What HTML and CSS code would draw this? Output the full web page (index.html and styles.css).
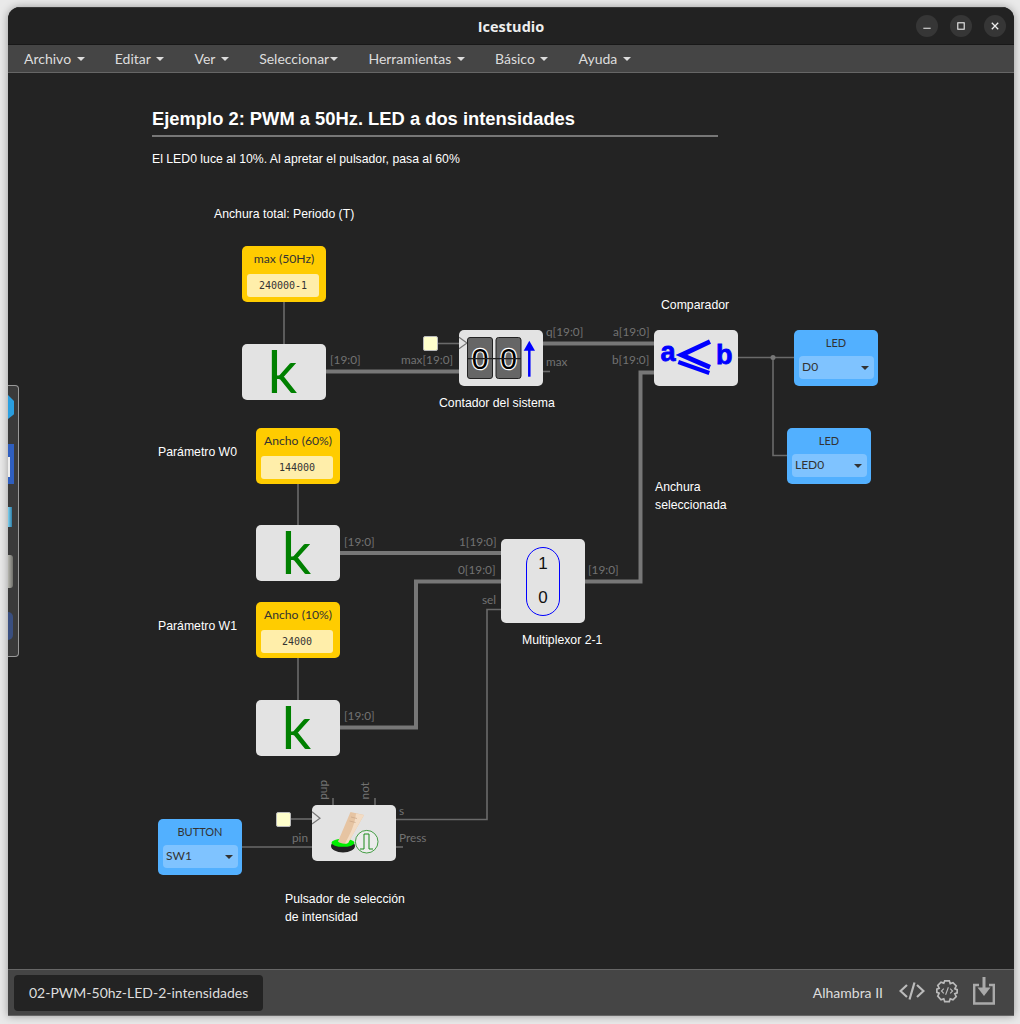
FILE: index.html
```html
<!DOCTYPE html>
<html lang="en">
<head>
    <meta charset="UTF-8">
    <meta name="viewport" content="width=device-width, initial-scale=1.0">
    <title>Icestudio</title>
    <link rel="stylesheet" href="styles.css">
</head>
<body>
    <div class="window">
        <header class="titlebar">
            <span class="title">Icestudio</span>
            <div class="win-buttons">
                <span class="win-btn"><svg width="24" height="24" viewBox="0 0 24 24"><path d="M8 14.500h8" stroke="#eee" stroke-width="1.200"/></svg></span>
                <span class="win-btn"><svg width="24" height="24" viewBox="0 0 24 24"><rect x="8.500" y="8.500" width="7" height="7" fill="none" stroke="#eee" stroke-width="1.200"/></svg></span>
                <span class="win-btn"><svg width="24" height="24" viewBox="0 0 24 24"><path d="M8.500 8.500l7 7M15.500 8.500l-7 7" stroke="#eee" stroke-width="1.400"/></svg></span>
            </div>
        </header>
        <nav class="menubar">
            <span class="menu-item">Archivo<i class="caret"></i></span>
            <span class="menu-item">Editar<i class="caret"></i></span>
            <span class="menu-item">Ver<i class="caret"></i></span>
            <span class="menu-item tight">Seleccionar<i class="caret"></i></span>
            <span class="menu-item">Herramientas<i class="caret"></i></span>
            <span class="menu-item">Básico<i class="caret"></i></span>
            <span class="menu-item">Ayuda<i class="caret"></i></span>
        </nav>

        <main class="canvas">
            <div class="diagram">
                <!-- wires, in page coordinates -->
                <svg class="wires" width="1020" height="1024" viewBox="0 0 1020 1024" fill="none">
                    <g stroke="#777" stroke-width="4">
                        <path d="M326 371.500H459"/>
                        <path d="M543 343.500H654"/>
                        <path d="M654 372.500H640.500V581.500H585"/>
                        <path d="M340 553H501"/>
                        <path d="M501 581.500H416V727.500H340"/>
                    </g>
                    <g stroke="#6a6a6a" stroke-width="1.600">
                        <path d="M284 302V344"/>
                        <path d="M298 484V525"/>
                        <path d="M298 658V700"/>
                        <path d="M438 343.500H459"/>
                        <path d="M543 371.500H550"/>
                        <path d="M738 357.500H794"/>
                        <path d="M773 357.500V455.500H787"/>
                        <path d="M501 609.500H487V819.500H396"/>
                        <path d="M242 847H312"/>
                        <path d="M291 819H312"/>
                        <path d="M333 798V805"/>
                        <path d="M375 798V805"/>
                        <path d="M396 847H403"/>
                    </g>
                    <circle cx="773" cy="357.500" r="2.500" fill="#777"/>
                </svg>

                <h1 class="heading">Ejemplo 2: PWM a 50Hz. LED a dos intensidades</h1>
                <p class="note n-intro">El LED0 luce al 10%. Al apretar el pulsador, pasa al 60%</p>
                <p class="note n-period">Anchura total: Periodo (T)</p>
                <p class="note n-counter">Contador del sistema</p>
                <p class="note n-comp">Comparador</p>
                <p class="note n-w0">Parámetro W0</p>
                <p class="note n-w1">Parámetro W1</p>
                <p class="note n-sel">Anchura<br>seleccionada</p>
                <p class="note n-mux">Multiplexor 2-1</p>
                <p class="note n-press">Pulsador de selección<br>de intensidad</p>

                <div class="block const c-max"><span class="block-name">max (50Hz)</span><span class="const-value">240000-1</span></div>
                <div class="block const c-w0"><span class="block-name">Ancho (60%)</span><span class="const-value">144000</span></div>
                <div class="block const c-w1"><span class="block-name">Ancho (10%)</span><span class="const-value">24000</span></div>

                <div class="block code k-max">k</div>
                <div class="block code k-w0">k</div>
                <div class="block code k-w1">k</div>

                <span class="clock clk-counter"></span>
                <span class="clock clk-press"></span>

                <!-- counter -->
                <div class="block code b-counter">
                    <svg width="84" height="56" viewBox="0 0 84 56" fill="none">
                        <path d="M0 7.300L8 13L0 18.700" stroke="#777" stroke-width="1.200"/>
                        <rect x="8.500" y="7.500" width="25" height="41" rx="2.500" fill="#666" stroke="#222"/>
                        <rect x="37" y="7.500" width="25" height="41" rx="2.500" fill="#666" stroke="#222"/>
                        <text x="21" y="39" class="digit">0</text>
                        <text x="49.500" y="39" class="digit">0</text>
                        <path d="M8.500 28.700H62" stroke="#222" stroke-width="1.300"/>
                        <path d="M70.300 46.700V20" stroke="#00f" stroke-width="2.500"/>
                        <path d="M64.700 20.700L70.300 10.700L76 20.700Z" fill="#00f"/>
                    </svg>
                </div>

                <!-- comparator -->
                <div class="block code b-comp">
                    <svg width="84" height="56" viewBox="0 0 84 56" fill="none">
                        <text x="6.500" y="31" class="cmp-letter">a</text>
                        <text x="62" y="34" class="cmp-letter">b</text>
                        <path d="M56 11.700L27.500 25L56 37.200" stroke="#00f" stroke-width="4.800"/>
                        <path d="M24.300 32L55.300 43" stroke="#00f" stroke-width="4"/>
                    </svg>
                </div>

                <!-- mux -->
                <div class="block code b-mux">
                    <div class="mux-pill"><span>1</span><span>0</span></div>
                </div>

                <!-- push button -->
                <div class="block code b-press">
                    <svg width="84" height="56" viewBox="0 0 84 56" fill="none">
                        <path d="M0 6.700L8 13.300L0 19" stroke="#777" stroke-width="1.200"/>
                        <ellipse cx="31" cy="41" rx="12" ry="6.500" fill="#222"/>
                        <ellipse cx="31" cy="37.800" rx="11.500" ry="4" fill="#0e0"/>
                        <path d="M26 36.500L38.500 7L52 10L36 38C33 39.500 28 38.500 26 36.500Z" fill="#e6c4a2"/>
                        <path d="M44 8.500L52 10L36 38C35 38.400 34 38.500 33 38.500C39 28 43 18 44 8.500Z" fill="#f3dcc4"/>
                        <path d="M39 12l6 1.500M37.500 16l6 1.500" stroke="#c9a586" stroke-width=".7"/>
                        <circle cx="54.700" cy="36.700" r="11.300" fill="#ececec" stroke="#1a8a1a" stroke-width=".8"/>
                        <path d="M48 44H52V29H57V44H61" stroke="#1a8a1a" stroke-width="1"/>
                    </svg>
                </div>

                <div class="block pin p-d0"><span class="block-name">LED</span><span class="pin-select">D0<i class="caret dark"></i></span></div>
                <div class="block pin p-led0"><span class="block-name">LED</span><span class="pin-select">LED0<i class="caret dark"></i></span></div>
                <div class="block pin p-sw1"><span class="block-name">BUTTON</span><span class="pin-select">SW1<i class="caret dark"></i></span></div>

                <span class="port pt-k0">[19:0]</span>
                <span class="port pt-cmax">max[19:0]</span>
                <span class="port pt-q">q[19:0]</span>
                <span class="port pt-a">a[19:0]</span>
                <span class="port pt-b">b[19:0]</span>
                <span class="port pt-max">max</span>
                <span class="port pt-k1">[19:0]</span>
                <span class="port pt-in1">1[19:0]</span>
                <span class="port pt-in0">0[19:0]</span>
                <span class="port pt-out">[19:0]</span>
                <span class="port pt-sel">sel</span>
                <span class="port pt-k2">[19:0]</span>
                <span class="port pt-pin">pin</span>
                <span class="port pt-s">s</span>
                <span class="port pt-press">Press</span>
                <span class="port vert pt-pup">pup</span>
                <span class="port vert pt-not">not</span>
            </div>

            <!-- collapsed dock at the left edge -->
            <div class="dock">
                <span class="dock-icon d-blue"></span>
                <span class="dock-icon d-bar"></span>
                <span class="dock-icon d-cyan"></span>
                <span class="dock-icon d-grey"></span>
                <span class="dock-icon d-round"></span>
            </div>
        </main>

        <footer class="footer">
            <span class="file-tab">02-PWM-50hz-LED-2-intensidades</span>
            <div class="footer-right">
                <span class="board">Alhambra II</span>
                <svg width="26" height="26" viewBox="0 0 26 26" fill="none" stroke="#bbb" stroke-width="2.200">
                    <path d="M8 7L1.500 13L8 19M18 7L24.500 13L18 19M15.500 4.500L10.500 21.500"/>
                </svg>
                <svg width="24" height="24" viewBox="0 0 26 26" fill="none" stroke="#bbb">
                    <path stroke-width="1.800" d="M10.500 2h5l1 3 3-1 3.500 3.500-1.500 3 2.500 1v3.500l-2.500 1 1.500 3-3.500 3.500-3-1-1 3h-5l-1-3-3 1L3 18.500l1.500-3-2.500-1V11l2.500-1-1.500-3L6.500 3.500l3 1z"/>
                    <path stroke-width="1.200" d="M9.500 10.500L7 13l2.500 2.500M16.500 10.500L19 13l-2.500 2.500M14.500 9l-3 8"/>
                </svg>
                <svg class="save-icon" width="22" height="28" viewBox="0 0 22 28" fill="none" stroke="#aaa" stroke-width="2.400">
                    <path d="M6 8H1.200V26.500H20.800V8H16"/>
                    <path d="M11 0V12" stroke-width="3"/>
                    <path d="M4.500 10.500L11 19L17.500 10.500Z" fill="#aaa" stroke="none"/>
                </svg>
            </div>
        </footer>
    </div>
</body>
</html>
```

FILE: styles.css
```css
* {
    box-sizing: border-box;
}
html, body {
    height: 100%;
}
body {
    margin: 0;
    padding: 7px 6px 8px 8px;
    background: #e9e9e9;
    font-family: Lato, sans-serif;
    color: #ddd;
    overflow: hidden;
}
.window {
    display: flex;
    flex-direction: column;
    height: 100%;
    background: #232323;
    border-radius: 12px 12px 0 0;
    box-shadow: 0 0 8px rgba(0, 0, 0, 0.35);
    overflow: hidden;
}

/* title bar */
.titlebar {
    position: relative;
    flex: 0 0 38px;
    display: flex;
    align-items: center;
    justify-content: center;
    background: #222;
    border-top: 1px solid #383838;
    border-bottom: 1px solid #181818;
}
.title {
    font-family: "Open Sans", sans-serif;
    font-weight: 700;
    font-size: 14.500px;
    color: #eee;
}
.win-buttons {
    position: absolute;
    right: 8px;
    top: 7px;
    display: flex;
    gap: 12px;
}
.win-btn {
    width: 22px;
    height: 22px;
    border-radius: 50%;
    background: #363636;
    display: flex;
    align-items: center;
    justify-content: center;
}

/* menu bar */
.menubar {
    flex: 0 0 28px;
    display: flex;
    align-items: center;
    padding-left: 16px;
    gap: 30.200px;
    background: #454545;
    border-bottom: 1px solid #666;
    font-size: 14px;
    color: #ddd;
}
.menu-item {
    display: flex;
    align-items: center;
}
.caret {
    display: inline-block;
    margin-left: 5.500px;
    border-top: 4px solid #ddd;
    border-left: 4px solid transparent;
    border-right: 4px solid transparent;
}
.menu-item.tight .caret {
    margin-left: 1px;
}
.caret.dark {
    margin-left: auto;
    margin-top: 4px;
    border-top-color: #333;
    border-top-width: 4.500px;
}

/* canvas */
.canvas {
    position: relative;
    flex: 1;
    overflow: hidden;
    background: #232323;
}
.diagram {
    position: absolute;
    left: -8px;
    top: -73px;
    width: 1020px;
    height: 1024px;
}
.wires {
    position: absolute;
    left: 0;
    top: 0;
}
.heading {
    position: absolute;
    left: 152px;
    top: 107px;
    width: 566px;
    height: 30px;
    margin: 0;
    border-bottom: 2px solid #777;
    font-family: "Liberation Sans", sans-serif;
    font-size: 18.350px;
    font-weight: 700;
    line-height: 23px;
    color: #fff;
}
.note {
    position: absolute;
    margin: 0;
    font-family: "Liberation Sans", sans-serif;
    font-size: 12.250px;
    line-height: 18px;
    color: #fff;
    white-space: nowrap;
}
.n-intro { left: 152px; top: 150px; }
.n-period { left: 214px; top: 205px; }
.n-counter { left: 439px; top: 394px; }
.n-comp { left: 661px; top: 296px; }
.n-w0 { left: 158px; top: 443px; }
.n-w1 { left: 158px; top: 617px; }
.n-sel { left: 655px; top: 478px; }
.n-mux { left: 522px; top: 631px; }
.n-press { left: 285px; top: 890px; }

/* blocks */
.block {
    position: absolute;
    width: 84px;
    height: 56px;
    border-radius: 5px;
}
.block-name {
    display: block;
    padding-top: 5px;
    height: 28px;
    text-align: center;
    font-size: 12.200px;
    line-height: 15px;
    color: #333;
}
.const {
    background: #fc0;
}
.const-value {
    display: block;
    margin: 0 7px 0 5px;
    height: 23px;
    border-radius: 3px;
    background: #fea;
    text-align: center;
    font-family: "DejaVu Sans Mono", monospace;
    font-size: 10px;
    line-height: 24px;
    color: #333;
}
.c-max { left: 242px; top: 246px; }
.c-w0 { left: 256px; top: 428px; }
.c-w1 { left: 256px; top: 602px; }
.code {
    background: #e3e3e3;
}
.k-max, .k-w0, .k-w1 {
    padding-right: 3px;
    text-align: center;
    font-size: 58px;
    line-height: 53px;
    color: #008000;
}
.k-max { left: 242px; top: 344px; }
.k-w0 { left: 256px; top: 525px; }
.k-w1 { left: 256px; top: 700px; }
.b-counter { left: 459px; top: 330px; }
.b-comp { left: 654px; top: 330px; }
.b-mux {
    left: 501px;
    top: 539px;
    height: 84px;
    display: flex;
    align-items: center;
    justify-content: center;
}
.b-press { left: 312px; top: 805px; }
.digit {
    font-family: "Liberation Sans", sans-serif;
    font-size: 30px;
    fill: #000;
    stroke: #fff;
    stroke-width: 2.400px;
    paint-order: stroke;
    text-anchor: middle;
}
.cmp-letter {
    font-family: "Liberation Sans", sans-serif;
    font-size: 27px;
    font-weight: 700;
    fill: #00f;
    stroke: #00f;
    stroke-width: 0.800px;
}
.mux-pill {
    width: 34px;
    height: 69px;
    display: flex;
    flex-direction: column;
    justify-content: space-around;
    align-items: center;
    border: 1px solid #00f;
    border-radius: 17px;
    font-family: "Liberation Sans", sans-serif;
    font-size: 17px;
    color: #111;
}
.pin {
    background: #52b0ff;
}
.pin .block-name {
    height: 26px;
    font-size: 11px;
}
.pin-select {
    display: flex;
    align-items: center;
    margin: 0 4px 0 5px;
    height: 23px;
    padding: 0 5px 3px 3px;
    border-radius: 4px;
    background: #7fc3ff;
    font-size: 12px;
    color: #333;
}
.p-d0 { left: 794px; top: 330px; }
.p-led0 { left: 787px; top: 428px; }
.p-sw1 { left: 158px; top: 819px; }
.clock {
    position: absolute;
    width: 15px;
    height: 15px;
    border-radius: 2px;
    background: #ffc;
    border: 1px solid #bbb;
}
.clk-counter { left: 423px; top: 336px; }
.clk-press { left: 276px; top: 812px; }

/* port labels */
.port {
    position: absolute;
    font-size: 11.800px;
    line-height: 14px;
    color: #727272;
    white-space: nowrap;
}
.port.vert {
    writing-mode: vertical-rl;
    transform: rotate(180deg);
}
.pt-k0 { left: 330px; top: 353px; }
.pt-cmax { left: 401px; top: 353px; }
.pt-q { left: 546px; top: 325px; }
.pt-a { left: 613px; top: 325px; }
.pt-b { left: 612px; top: 353px; }
.pt-max { left: 546px; top: 355px; }
.pt-k1 { left: 344px; top: 535px; }
.pt-in1 { left: 459px; top: 535px; }
.pt-in0 { left: 458px; top: 563px; }
.pt-out { left: 588px; top: 563px; }
.pt-sel { left: 482px; top: 593px; }
.pt-k2 { left: 344px; top: 709px; }
.pt-pin { left: 292px; top: 831px; }
.pt-s { left: 399px; top: 804px; }
.pt-press { left: 399px; top: 831px; }
.pt-pup { left: 316px; top: 780px; }
.pt-not { left: 358px; top: 782px; }

/* dock */
.dock {
    position: absolute;
    left: 0;
    top: 312px;
    width: 11px;
    height: 272px;
    background: #3a3a3a;
    border: 1px solid #999;
    border-left: 0;
    border-radius: 0 4px 4px 0;
}
.dock-icon {
    position: absolute;
    left: 0;
}
.d-blue {
    top: 9px;
    width: 6px;
    height: 24px;
    background: #2a9fe0;
    clip-path: polygon(0 0, 100% 25%, 100% 80%, 0 100%);
}
.d-bar {
    top: 58px;
    width: 6px;
    height: 40px;
    background: #2f5fc0;
}
.d-bar::after {
    content: "";
    position: absolute;
    left: 0;
    top: 13px;
    width: 2px;
    height: 20px;
    background: #eee;
}
.d-cyan {
    top: 121px;
    width: 4px;
    height: 20px;
    background: linear-gradient(90deg, #7fd0ee, #2f7fa8);
}
.d-grey {
    top: 169px;
    width: 5px;
    height: 33px;
    background: linear-gradient(90deg, #b5b5ae, #6f6f6a);
    border-radius: 0 3px 3px 0;
}
.d-round {
    top: 226px;
    width: 5px;
    height: 28px;
    background: #3a4f80;
    border-radius: 0 14px 14px 0;
}

/* footer */
.footer {
    flex: 0 0 47px;
    display: flex;
    align-items: center;
    justify-content: space-between;
    padding: 0 19px 0 6px;
    background: #454545;
    border-top: 1px solid #666;
    border-bottom: 1px solid #666;
}
.file-tab {
    height: 36px;
    padding: 0 15px;
    border-radius: 4px;
    background: #232323;
    font-size: 14px;
    line-height: 36px;
    color: #ddd;
}
.footer-right {
    display: flex;
    align-items: center;
    gap: 10px;
    padding-bottom: 3px;
}
.board {
    margin-right: 6px;
    padding-top: 2px;
    font-size: 14px;
    color: #ddd;
}
.save-icon {
    margin-left: 4px;
}
```
